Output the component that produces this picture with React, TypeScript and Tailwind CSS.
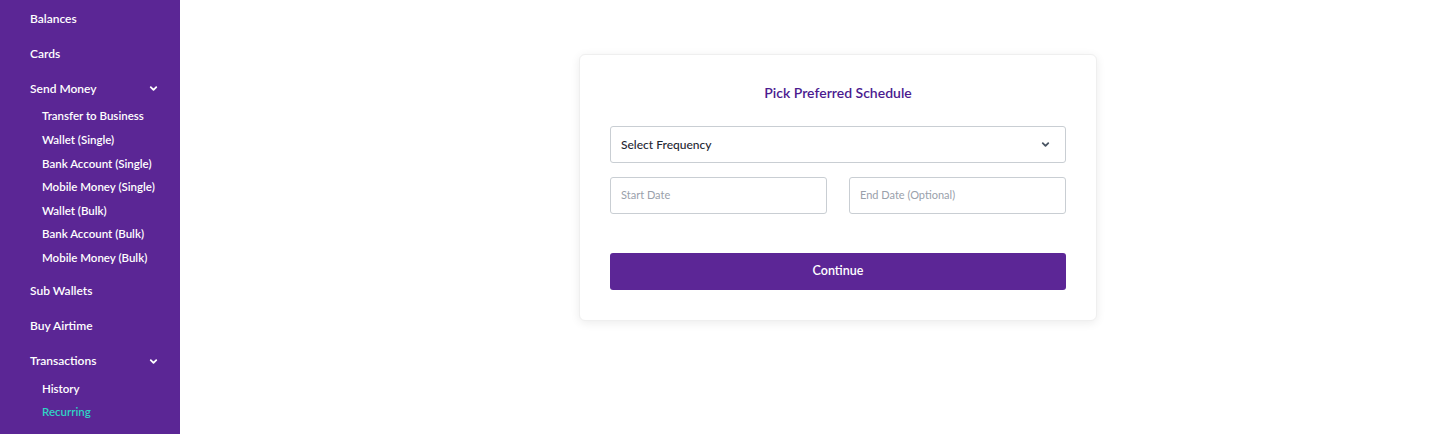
import React from 'react';

const Chevron: React.FC<{ className?: string }> = ({ className }) => (
  <svg viewBox="0 0 12 12" className={className} fill="none" stroke="currentColor" strokeWidth={2} strokeLinecap="round" strokeLinejoin="round">
    <path d="M3 4.5 6 7.5 9 4.5" />
  </svg>
);

const subSend = [
  'Transfer to Business',
  'Wallet (Single)',
  'Bank Account (Single)',
  'Mobile Money (Single)',
  'Wallet (Bulk)',
  'Bank Account (Bulk)',
  'Mobile Money (Bulk)',
];

const MainItem: React.FC<{ label: string; open?: boolean }> = ({ label, open }) => (
  <div className="flex items-center justify-between h-[35px] pl-[30px] pr-[21px] text-[12px] font-semibold text-white">
    <span>{label}</span>
    {open && <Chevron className="w-[11px] h-[11px]" />}
  </div>
);

const SubItem: React.FC<{ label: string; active?: boolean }> = ({ label, active }) => (
  <div className={`flex items-center h-[23.67px] pl-[42px] text-[11.5px] font-semibold ${active ? 'text-[#2fd3c4]' : 'text-white'}`}>
    {label}
  </div>
);

const App: React.FC = () => {
  return (
    <div className="flex w-[1456px] h-[434px] bg-white overflow-hidden" style={{ fontFamily: 'Lato, "Noto Sans", sans-serif' }}>
      <aside className="w-[180px] shrink-0 bg-[#5b2695] pt-[1px]">
        <MainItem label="Balances" />
        <MainItem label="Cards" />
        <MainItem label="Send Money" open />
        <div className="-mt-[2px] pb-[4px]">
          {subSend.map((s) => (
            <SubItem key={s} label={s} />
          ))}
        </div>
        <MainItem label="Sub Wallets" />
        <MainItem label="Buy Airtime" />
        <MainItem label="Transactions" open />
        <div className="-mt-[2px]">
          <SubItem label="History" />
          <SubItem label="Recurring" active />
        </div>
      </aside>

      <main className="flex-1 pt-[54px] pl-[399px]">
        <div className="w-[518px] rounded-[6px] border border-[#efefef] bg-white shadow-[0_2px_10px_rgba(0,0,0,0.08)] px-[30px] pt-[29px] pb-[30px]">
          <h2 className="text-center text-[14px] font-semibold text-[#4b1a8f] leading-[18px]">Pick Preferred Schedule</h2>

          <div className="mt-[24px] flex items-center justify-between h-[37px] rounded-[3px] border border-[#c9ced3] pl-[10px] pr-[14px]">
            <span className="text-[12px] font-medium text-[#1f2733]">Select Frequency</span>
            <Chevron className="w-[11px] h-[11px] text-[#4a5563]" />
          </div>

          <div className="mt-[14px] flex gap-[22px]">
            <div className="flex-1 flex items-center h-[37px] rounded-[3px] border border-[#c9ced3] pl-[10px]">
              <span className="text-[11px] text-[#9aa1ab]">Start Date</span>
            </div>
            <div className="flex-1 flex items-center h-[37px] rounded-[3px] border border-[#c9ced3] pl-[10px]">
              <span className="text-[11px] text-[#9aa1ab]">End Date (Optional)</span>
            </div>
          </div>

          <button className="mt-[39px] w-full h-[37px] rounded-[3px] bg-[#5c2696] text-white text-[12.5px] font-semibold">
            Continue
          </button>
        </div>
      </main>
    </div>
  );
};

export default App;
